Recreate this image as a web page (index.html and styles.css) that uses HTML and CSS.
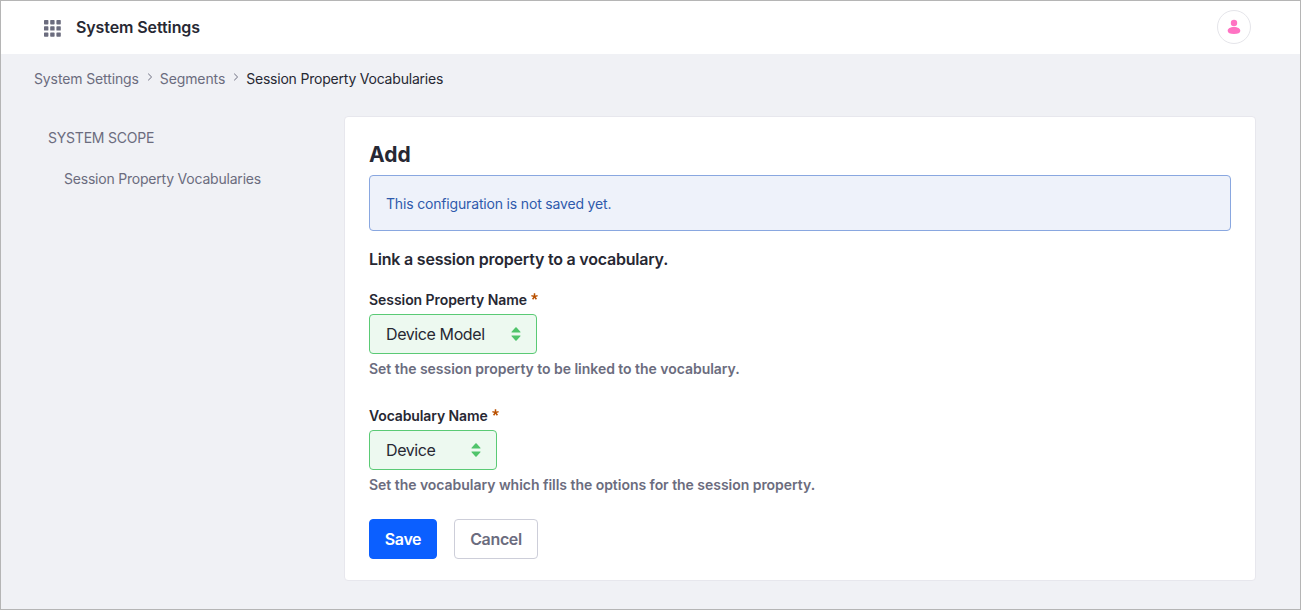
FILE: index.html
```html
<!DOCTYPE html>
<html lang="en">
<head>
<meta charset="utf-8">
<title>System Settings</title>
<link rel="stylesheet" href="styles.css">
</head>
<body>
<div class="app">
  <header class="topbar">
    <svg class="grid-icon" width="17" height="17" viewBox="0 0 17 17" fill="#6b6c7e">
      <rect x="0" y="0" width="4.4" height="4.4" rx=".7"/><rect x="6.2" y="0" width="4.4" height="4.4" rx=".7"/><rect x="12.4" y="0" width="4.4" height="4.4" rx=".7"/>
      <rect x="0" y="6.2" width="4.4" height="4.4" rx=".7"/><rect x="6.2" y="6.2" width="4.4" height="4.4" rx=".7"/><rect x="12.4" y="6.2" width="4.4" height="4.4" rx=".7"/>
      <rect x="0" y="12.4" width="4.4" height="4.4" rx=".7"/><rect x="6.2" y="12.4" width="4.4" height="4.4" rx=".7"/><rect x="12.4" y="12.4" width="4.4" height="4.4" rx=".7"/>
    </svg>
    <h1 class="title">System Settings</h1>
    <div class="avatar">
      <svg width="14" height="16" viewBox="0 0 14 16" fill="#ff73c3"><circle cx="7" cy="4" r="3.2"/><path d="M7 8.100c4 0 6.300 1.700 6.300 3.800 0 1.900-2.300 3-6.300 3S.7 13.800.7 11.900c0-2.100 2.300-3.800 6.300-3.800z"/></svg>
    </div>
  </header>
  <nav class="crumbs">
    <a class="crumb-a">System Settings</a>
    <svg class="chev" width="6" height="8" viewBox="0 0 6 8"><path d="M1.200.7 4.600 4 1.200 7.300"/></svg>
    <a class="crumb-b">Segments</a>
    <svg class="chev" width="6" height="8" viewBox="0 0 6 8"><path d="M1.200.7 4.600 4 1.200 7.300"/></svg>
    <span class="crumb-c">Session Property Vocabularies</span>
  </nav>
  <div class="content">
    <aside class="side">
      <div class="scope">SYSTEM SCOPE</div>
      <a class="side-link">Session Property Vocabularies</a>
    </aside>
    <main class="card">
      <h2 class="heading">Add</h2>
      <div class="alert"><span>This configuration is not saved yet.</span></div>
      <p class="lead">Link a session property to a vocabulary.</p>
      <section class="field">
        <label class="label"><span class="label-a">Session Property Name</span><svg class="star" width="7" height="7" viewBox="0 0 7 7"><path d="M3.500 3.600V.2M3.500 3.600.4 2.600M3.500 3.600 6.600 2.600M3.500 3.600 1.600 6.300M3.500 3.600 5.400 6.300"/></svg></label>
        <div class="select select-wide"><span>Device Model</span><svg class="carets" width="10" height="14" viewBox="0 0 10 14"><path d="M.9 5.600Q0 5.600.6 4.800L4.400.6Q5 0 5.600.6L9.400 4.800Q10 5.600 9.100 5.600ZM.9 8.400Q0 8.400.6 9.200L4.400 13.400Q5 14 5.600 13.400L9.400 9.200Q10 8.400 9.100 8.400Z"/></svg></div>
        <p class="hint">Set the session property to be linked to the vocabulary.</p>
      </section>
      <section class="field">
        <label class="label"><span class="label-b">Vocabulary Name</span><svg class="star" width="7" height="7" viewBox="0 0 7 7"><path d="M3.500 3.600V.2M3.500 3.600.4 2.600M3.500 3.600 6.600 2.600M3.500 3.600 1.600 6.300M3.500 3.600 5.400 6.300"/></svg></label>
        <div class="select"><span>Device</span><svg class="carets" width="10" height="14" viewBox="0 0 10 14"><path d="M.9 5.600Q0 5.600.6 4.800L4.400.6Q5 0 5.600.6L9.400 4.800Q10 5.600 9.100 5.600ZM.9 8.400Q0 8.400.6 9.200L4.400 13.400Q5 14 5.600 13.400L9.400 9.200Q10 8.400 9.100 8.400Z"/></svg></div>
        <p class="hint">Set the vocabulary which fills the options for the session property.</p>
      </section>
      <div class="actions">
        <button class="btn save">Save</button>
        <button class="btn cancel">Cancel</button>
      </div>
    </main>
  </div>
</div>
</body>
</html>
```
FILE: styles.css
```css
* { box-sizing: border-box; }
body { margin: 0; font-family: Inter, "Liberation Sans", sans-serif; color: #272833; }
h1, h2, p { margin: 0; }
svg { display: block; flex: none; }
.app { width: 1301px; height: 610px; border: 1px solid #b5b5b5; background: #f0f1f5; overflow: hidden; white-space: nowrap; }
.topbar { height: 53px; background: #fff; display: flex; align-items: center; padding: 0 49px 1px 43px; }
.grid-icon { margin-top: 3px; }
.title { margin-left: 15px; font-size: 16px; font-weight: 600; line-height: 24px; letter-spacing: -.1px; }
.avatar { width: 34px; height: 34px; margin-left: auto; border: 1px solid #e5e5ea; border-radius: 50%; display: flex; align-items: center; justify-content: center; }
.crumbs { height: 62px; padding: 14px 0 0 33px; display: flex; font-size: 14px; line-height: 21px; color: #6b6c7e; letter-spacing: -.12px; }
.chev { margin: 5px 7px 0 8px; fill: none; stroke: #6b6c7e; stroke-width: 1; }
.crumb-c { color: #272833; letter-spacing: -.21px; }
.content { display: flex; }
.side { width: 343px; padding: 11px 0 0 47px; font-size: 14px; line-height: 21px; color: #6b6c7e; letter-spacing: -.21px; }
.side-link { display: block; margin: 20px 0 0 16px; }
.card { width: 912px; height: 465px; padding: 24px; background: #fff; border: 1px solid #e7e7ed; border-radius: 4px; }
.heading { font-size: 21px; line-height: 28px; font-weight: 700; }
.alert { height: 56px; margin-top: 6px; padding: 1px 16px 0; border: 1px solid #89a7e0; border-radius: 4px; background: #eef2fa; color: #2e5aac; display: flex; align-items: center; font-size: 14px; letter-spacing: -.17px; }
.lead { margin-top: 16px; font-size: 16px; line-height: 24px; font-weight: 600; letter-spacing: -.22px; }
.field { height: 116px; padding-top: 18px; }
.label { display: flex; font-size: 14px; line-height: 21px; font-weight: 600; }
.label-a { letter-spacing: -.06px; }
.label-b { letter-spacing: -.12px; }
.star { margin: 4px 0 0 4px; fill: none; stroke: #b95000; stroke-width: 1.5; }
.select { width: 128px; height: 40px; margin-top: 4px; padding: 0 15px 0 16px; border: 1px solid #5aca75; border-radius: 4px; background: #edf9f0; display: flex; align-items: center; justify-content: space-between; font-size: 16px; letter-spacing: -.4px; }
.select-wide { width: 168px; }
.carets { fill: #50c46b; }
.hint { margin-top: 4px; font-size: 14px; line-height: 21px; font-weight: 600; color: #6b6c7e; letter-spacing: -.035px; }
.actions { display: flex; gap: 17px; padding-top: 16px; }
.btn { height: 40px; padding: 0; border: 1px solid #cdced9; border-radius: 4px; font: 600 16px/24px Inter, sans-serif; letter-spacing: -.35px; }
.save { width: 68px; background: #0b5fff; border-color: #0b5fff; color: #fff; }
.cancel { width: 84px; background: #fff; color: #6b6c7e; }
```
